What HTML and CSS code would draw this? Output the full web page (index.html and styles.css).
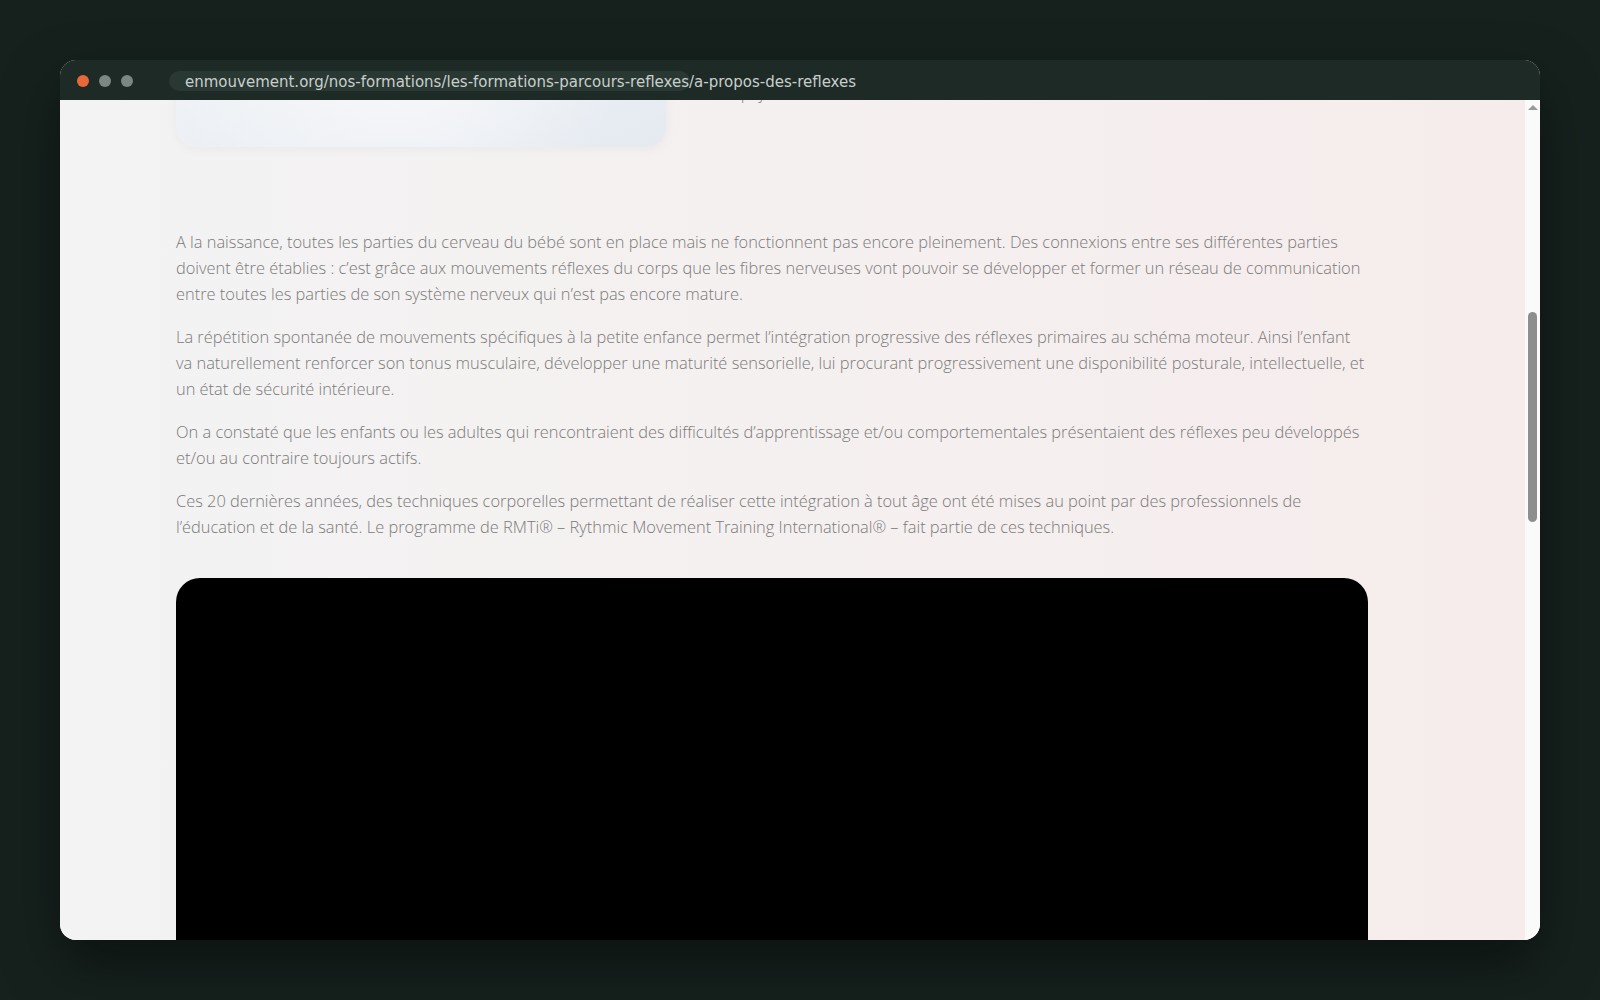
FILE: index.html
```html
<!DOCTYPE html>
<html lang="fr">
<head>
    <meta charset="UTF-8">
    <meta name="viewport" content="width=device-width, initial-scale=1.0">
    <title>À propos des réflexes</title>
    <link rel="stylesheet" href="styles.css">
</head>
<body>
    <div class="window">
        <div class="titlebar">
            <span class="dot close"></span>
            <span class="dot"></span>
            <span class="dot"></span>
            <div class="address">enmouvement.org/nos-formations/les-formations-parcours-reflexes/a-propos-des-reflexes</div>
        </div>

        <div class="viewport">
            <div class="page">
                <div class="article">
                    <!-- Intro: picture + side text -->
                    <div class="intro">
                        <div class="intro-picture"></div>
                        <p class="intro-text">Les réflexes primaires sont des mouvements automatiques présents dès la naissance. Ils jouent un rôle essentiel dans le développement moteur, émotionnel<br>et psychomoteur.</p>
                    </div>

                    <div class="body-text">
                        <p>A la naissance, toutes les parties du cerveau du bébé sont en place mais ne fonctionnent pas encore pleinement. Des connexions entre ses différentes parties doivent être établies : c’est grâce aux mouvements réflexes du corps que les fibres nerveuses vont pouvoir se développer et former un réseau de communication entre toutes les parties de son système nerveux qui n’est pas encore mature.</p>
                        <p>La répétition spontanée de mouvements spécifiques à la petite enfance permet l’intégration progressive des réflexes primaires au schéma moteur. Ainsi l’enfant va naturellement renforcer son tonus musculaire, développer une maturité sensorielle, lui procurant progressivement une disponibilité posturale, intellectuelle, et un état de sécurité intérieure.</p>
                        <p>On a constaté que les enfants ou les adultes qui rencontraient des difficultés d’apprentissage et/ou comportementales présentaient des réflexes peu développés et/ou au contraire toujours actifs.</p>
                        <p>Ces 20 dernières années, des techniques corporelles permettant de réaliser cette intégration à tout âge ont été mises au point par des professionnels de l’éducation et de la santé. Le programme de RMTi® – Rythmic Movement Training International® – fait partie de ces techniques.</p>
                    </div>

                    <div class="video"></div>
                </div>
            </div>

            <div class="scrollbar">
                <div class="scroll-arrow"></div>
                <div class="scroll-thumb"></div>
            </div>
        </div>
    </div>
</body>
</html>
```

FILE: styles.css
```css
* {
    box-sizing: border-box;
}

body {
    margin: 0;
    height: 1000px;
    padding: 60px;
    background: #16211e;
    overflow: hidden;
    font-family: "Open Sans", Arial, sans-serif;
}

.window {
    height: 880px;
    display: flex;
    flex-direction: column;
    border-radius: 16px;
    overflow: hidden;
    background: #f4f2f2;
    box-shadow: 0 24px 60px rgba(0, 0, 0, 0.45);
}

/* Browser chrome */
.titlebar {
    height: 40px;
    flex-shrink: 0;
    display: flex;
    align-items: center;
    padding: 2px 0 0 17px;
    background: #1d2a26;
}

.dot {
    width: 12px;
    height: 12px;
    border-radius: 50%;
    margin-right: 10px;
    background: #7c8783;
}

.dot.close {
    background: #e8683a;
}

.address {
    margin-left: 26px;
    width: 521px;
    height: 20px;
    padding: 1px 0 0 16px;
    border-radius: 10px;
    background: #2a3833;
    color: #c8cfcc;
    font: 15px/20px "DejaVu Sans", sans-serif;
    white-space: nowrap;
}

.viewport {
    flex: 1;
    min-height: 0;
    display: flex;
}

.page {
    flex: 1;
    overflow: hidden;
    background: linear-gradient(90deg, #f3f3f3 0%, #f5f0f0 50%, #f6ecec 100%);
}

/* page is scrolled down a bit */
.article {
    width: 1192px;
    margin: -253px 0 0 116px;
}

.intro {
    display: flex;
    align-items: flex-end;
}

.intro-picture {
    width: 490px;
    height: 300px;
    flex-shrink: 0;
    border-radius: 20px;
    background: radial-gradient(ellipse at 45% 70%, #f7f8fa 0%, rgba(247, 248, 250, 0) 60%),
        linear-gradient(160deg, #f3f5f8 0%, #eef1f5 55%, #e5eaf1 100%);
    box-shadow: 0 2px 10px rgba(120, 130, 150, 0.08);
}

.intro-text {
    margin: 0 0 41px 56px;
    font-weight: 300;
    font-size: 16.4px;
    line-height: 26px;
    color: #7a7a7a;
}

.body-text {
    margin-top: 82px;
}

.body-text p {
    margin: 0 0 17px;
    font-weight: 300;
    font-size: 16.4px;
    line-height: 26px;
    color: #7a7a7a;
}

.body-text p:last-child {
    margin-bottom: 0;
}

.video {
    margin-top: 38px;
    height: 600px;
    border-radius: 24px;
    background: #000;
}

/* Classic scrollbar */
.scrollbar {
    width: 15px;
    flex-shrink: 0;
    background: #fafafa;
}

.scroll-arrow {
    width: 0;
    height: 0;
    margin: 5px auto 0;
    border-left: 5px solid transparent;
    border-right: 5px solid transparent;
    border-bottom: 5px solid #9a9a9a;
}

.scroll-thumb {
    width: 9px;
    height: 210px;
    margin: 202px 0 0 3px;
    border-radius: 5px;
    background: #8e8e8e;
}
```
